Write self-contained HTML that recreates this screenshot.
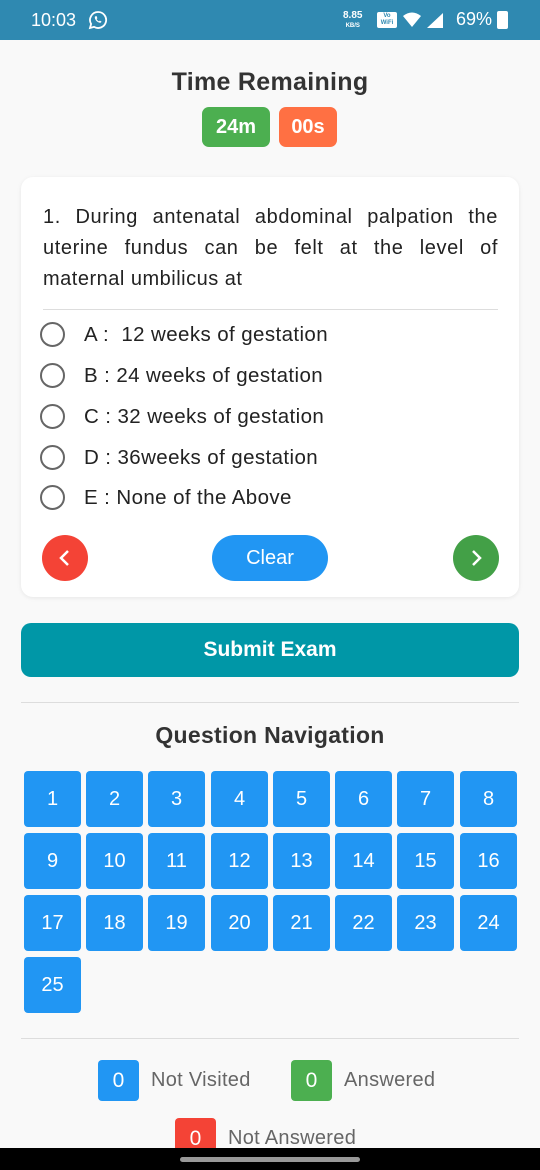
<!DOCTYPE html><html><head><style>
*{margin:0;padding:0;box-sizing:border-box}
body{width:540px;height:1170px;overflow:hidden;background:#f9f9f9;font-family:"Liberation Sans",sans-serif;position:relative;color:#333}
.abs{position:absolute}
.sb{left:0;top:0;width:540px;height:40px;background:#2f89b1;color:#fff}
.card{left:21px;top:177px;width:498px;height:420px;background:#fff;border-radius:12px;box-shadow:0 1px 4px rgba(0,0,0,.08)}
.opt{left:40px;font-size:20.5px;color:#222;letter-spacing:0.4px}
.rad{position:absolute;left:0;top:-1px;width:25px;height:25px;border:2px solid #666;border-radius:50%}
.cell{position:absolute;width:57px;height:56px;background:#2196f3;color:#fff;border-radius:4px;font-size:20px;display:flex;align-items:center;justify-content:center}
.lg{position:absolute;width:41px;height:41px;border-radius:4px;color:#fff;font-size:21px;display:flex;align-items:center;justify-content:center}
.lt{position:absolute;font-size:20px;color:#666;letter-spacing:0.3px}
.ql{height:31px;text-align:justify;text-align-last:justify;white-space:nowrap;letter-spacing:0.6px}
</style></head><body>
<div class="abs sb">
<div class="abs" style="left:31px;top:10px;font-size:18px">10:03</div>
<svg class="abs" style="left:88px;top:10px" width="20" height="20" viewBox="0 0 20 20"><path d="M10 2a8 8 0 0 0-6.9 12L2 18l4.1-1.1A8 8 0 1 0 10 2z" fill="none" stroke="#fff" stroke-width="1.8"/><path d="M7 6.5c-.5 1 0 3 1.5 4.5s3.5 2 4.5 1.5l.5-1-1.7-.9-.8.8c-1-.4-2-1.4-2.4-2.4l.8-.8L8.5 6z" fill="#fff"/></svg>
<div class="abs" style="left:343px;top:11px;font-size:10px;font-weight:bold;line-height:9px;text-align:center">8.85<br><span style="font-size:6px">KB/S</span></div>
<div class="abs" style="left:377px;top:12px;width:20px;height:16px;background:#fff;border-radius:2px;color:#2f89b1;font-size:6px;font-weight:bold;text-align:center;line-height:7px;padding-top:1px">Vo<br>WiFi</div>
<svg class="abs" style="left:403px;top:12px" width="42" height="17" viewBox="0 0 42 17"><path d="M0 4Q9-3 18 4L9 15z" fill="#fff"/><path d="M40 1V16H24z" fill="#fff"/></svg>
<div class="abs" style="left:456px;top:9px;font-size:18px">69%</div>
<div class="abs" style="left:497px;top:11px;width:11px;height:18px;background:#fff;border-radius:2px"></div>
</div>
<div class="abs" style="left:0;width:540px;top:68px;text-align:center;font-size:25px;color:#333;font-weight:bold;letter-spacing:0.3px">Time Remaining</div>
<div class="abs" style="left:202px;top:107px;width:68px;height:40px;background:#4caf50;border-radius:7px;color:#fff;font-size:20px;font-weight:bold;text-align:center;line-height:40px">24m</div>
<div class="abs" style="left:279px;top:107px;width:58px;height:40px;background:#ff7043;border-radius:7px;color:#fff;font-size:20px;font-weight:bold;text-align:center;line-height:40px">00s</div>
<div class="abs card"></div>
<div class="abs" style="left:43px;top:202px;width:455px;font-size:20px;line-height:31px;color:#222">
<div class="ql">1. During antenatal abdominal palpation the</div>
<div class="ql">uterine fundus can be felt at the level of</div>
<div style="height:31px;letter-spacing:0.5px">maternal umbilicus at</div>
</div>
<div class="abs" style="left:43px;top:309px;width:455px;height:1px;background:#ddd"></div>
<div class="abs opt" style="top:323px"><div class="rad"></div><span style="position:absolute;left:44px;white-space:nowrap">A :&nbsp; 12 weeks of gestation</span></div>
<div class="abs opt" style="top:364px"><div class="rad"></div><span style="position:absolute;left:44px;white-space:nowrap">B :&nbsp;24 weeks of gestation</span></div>
<div class="abs opt" style="top:405px"><div class="rad"></div><span style="position:absolute;left:44px;white-space:nowrap">C :&nbsp;32 weeks of gestation</span></div>
<div class="abs opt" style="top:446px"><div class="rad"></div><span style="position:absolute;left:44px;white-space:nowrap">D :&nbsp;36weeks of gestation</span></div>
<div class="abs opt" style="top:486px"><div class="rad"></div><span style="position:absolute;left:44px;white-space:nowrap">E :&nbsp;None of the Above</span></div>
<svg class="abs" style="left:42px;top:535px" width="46" height="46"><circle cx="23" cy="23" r="23" fill="#f44336"/><path d="M26 16l-7 7 7 7" stroke="#fff" stroke-width="2.5" fill="none"/></svg>
<svg class="abs" style="left:453px;top:535px" width="46" height="46"><circle cx="23" cy="23" r="23" fill="#43a047"/><path d="M20 16l7 7-7 7" stroke="#fff" stroke-width="2.5" fill="none"/></svg>
<div class="abs" style="left:212px;top:535px;width:116px;height:46px;border-radius:23px;background:#2196f3;color:#fff;font-size:20px;text-align:center;line-height:46px">Clear</div>
<div class="abs" style="left:21px;top:623px;width:498px;height:54px;border-radius:10px;background:#0097a7;color:#fff;font-size:21px;font-weight:bold;text-align:center;line-height:54px">Submit Exam</div>
<div class="abs" style="left:21px;top:702px;width:498px;height:1px;background:#ddd"></div>
<div class="abs" style="left:0;width:540px;top:722px;text-align:center;font-size:23px;color:#333;font-weight:bold;letter-spacing:0.3px">Question Navigation</div>
<div class="abs" style="left:0;top:0;width:540px;height:1170px">
<div class="cell" style="left:24px;top:771px">1</div><div class="cell" style="left:86px;top:771px">2</div><div class="cell" style="left:148px;top:771px">3</div><div class="cell" style="left:211px;top:771px">4</div><div class="cell" style="left:273px;top:771px">5</div><div class="cell" style="left:335px;top:771px">6</div><div class="cell" style="left:397px;top:771px">7</div><div class="cell" style="left:460px;top:771px">8</div>
<div class="cell" style="left:24px;top:833px">9</div><div class="cell" style="left:86px;top:833px">10</div><div class="cell" style="left:148px;top:833px">11</div><div class="cell" style="left:211px;top:833px">12</div><div class="cell" style="left:273px;top:833px">13</div><div class="cell" style="left:335px;top:833px">14</div><div class="cell" style="left:397px;top:833px">15</div><div class="cell" style="left:460px;top:833px">16</div>
<div class="cell" style="left:24px;top:895px">17</div><div class="cell" style="left:86px;top:895px">18</div><div class="cell" style="left:148px;top:895px">19</div><div class="cell" style="left:211px;top:895px">20</div><div class="cell" style="left:273px;top:895px">21</div><div class="cell" style="left:335px;top:895px">22</div><div class="cell" style="left:397px;top:895px">23</div><div class="cell" style="left:460px;top:895px">24</div>
<div class="cell" style="left:24px;top:957px">25</div>
</div>
<div class="abs" style="left:21px;top:1038px;width:498px;height:1px;background:#ddd"></div>
<div class="lg" style="left:98px;top:1060px;background:#2196f3">0</div><div class="lt" style="left:151px;top:1069px">Not Visited</div>
<div class="lg" style="left:291px;top:1060px;background:#4caf50">0</div><div class="lt" style="left:344px;top:1069px">Answered</div>
<div class="lg" style="left:175px;top:1118px;background:#f44336">0</div><div class="lt" style="left:228px;top:1127px">Not Answered</div>
<div class="abs" style="left:0;top:1148px;width:540px;height:22px;background:#000"><div class="abs" style="left:180px;top:9px;width:180px;height:5px;border-radius:3px;background:#999"></div></div>
</body></html>
